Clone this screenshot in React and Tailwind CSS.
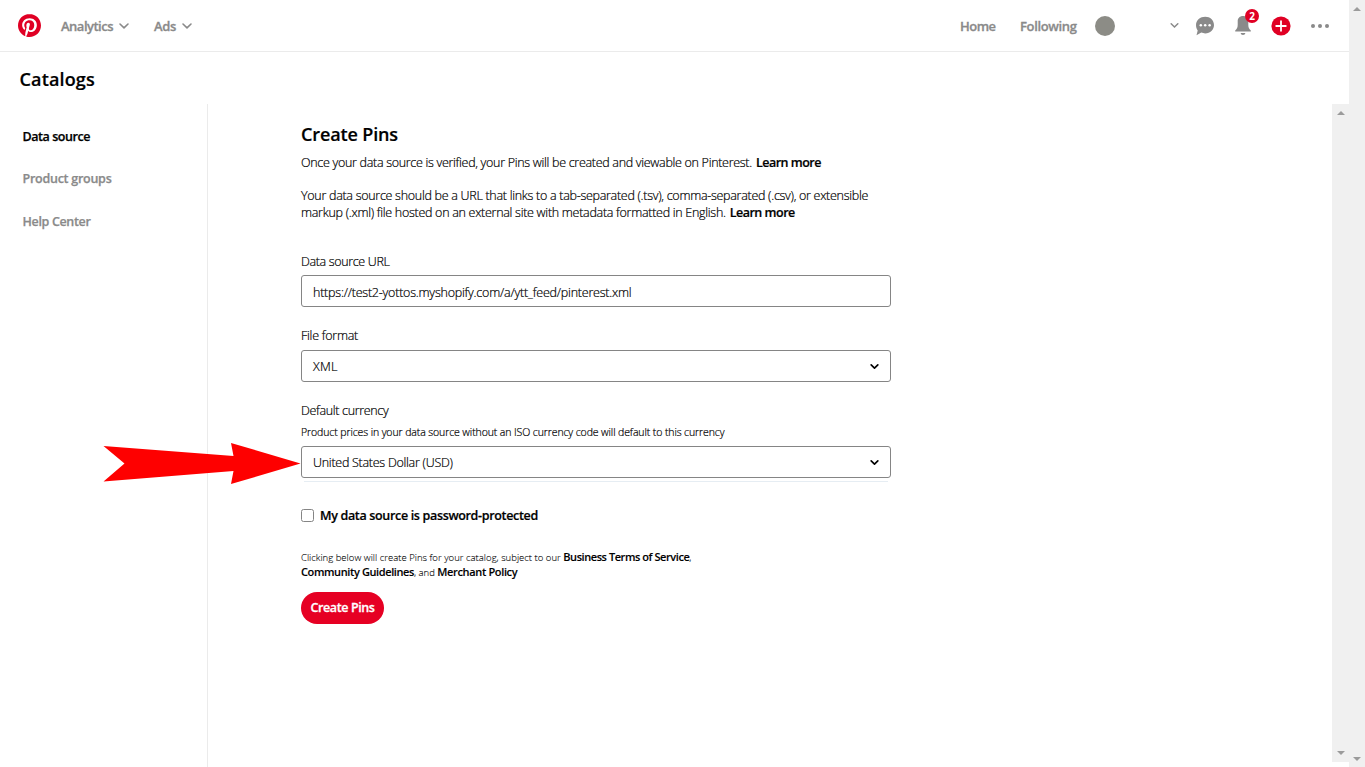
import React from "react";

function Chevron({ className }) {
  return (
    <svg viewBox="0 0 10 6" className={className} fill="none" stroke="currentColor" strokeLinecap="round" strokeLinejoin="round">
      <path d="M1 1l4 3.9L9 1" />
    </svg>
  );
}

function Logo() {
  return (
    <svg viewBox="0 0 24 24" className="h-[23px] w-[23px]">
      <circle cx="12" cy="12" r="11.5" fill="#fff" />
      <path
        fill="#e00024"
        d="M12 0C5.373 0 0 5.372 0 12c0 5.084 3.163 9.426 7.627 11.174-.105-.949-.2-2.405.042-3.441.218-.937 1.407-5.965 1.407-5.965s-.359-.719-.359-1.782c0-1.668.967-2.914 2.171-2.914 1.023 0 1.518.769 1.518 1.69 0 1.029-.655 2.568-.994 3.995-.283 1.194.599 2.169 1.777 2.169 2.133 0 3.772-2.249 3.772-5.495 0-2.873-2.064-4.882-5.012-4.882-3.414 0-5.418 2.561-5.418 5.207 0 1.031.397 2.138.893 2.738a.36.36 0 0 1 .083.345l-.333 1.36c-.053.22-.174.267-.402.161-1.499-.698-2.436-2.889-2.436-4.649 0-3.785 2.75-7.262 7.929-7.262 4.163 0 7.398 2.967 7.398 6.931 0 4.136-2.607 7.464-6.227 7.464-1.216 0-2.359-.631-2.75-1.378l-.748 2.853c-.271 1.043-1.002 2.35-1.492 3.146 1.124.347 2.317.535 3.554.535 6.627 0 12-5.373 12-12 0-6.628-5.373-12-12-12z"
      />
    </svg>
  );
}

function Header() {
  return (
    <header className="flex h-[52px] shrink-0 items-center border-b border-[#ebebeb] pl-[18px] text-[13px] font-semibold text-[#8a8a8a] [-webkit-text-stroke:0.3px]">
      <Logo />
      <span className="ml-5 mt-[3px] w-[52px] whitespace-nowrap tracking-[-0.5px]">Analytics</span>
      <Chevron className="ml-1.5 h-1.5 w-2.5 overflow-visible [stroke-width:1.6px]" />
      <span className="ml-[25px] mt-[3px] w-[22px] whitespace-nowrap tracking-[-0.35px]">Ads</span>
      <Chevron className="ml-1.5 h-1.5 w-2.5 overflow-visible [stroke-width:1.6px]" />
      <div className="flex-1" />
      <span className="mt-[3px] w-[60px] whitespace-nowrap tracking-[-0.53px]">Home</span>
      <span className="mt-[3px] w-[75px] whitespace-nowrap tracking-[-0.36px]">Following</span>
      <span className="h-5 w-5 rounded-full bg-[#8c8c86]" />
      <Chevron className="ml-[55px] h-[5px] w-[9px] overflow-visible [stroke-width:1.8px]" />
      <svg viewBox="0 0 20 20" className="ml-4 h-5 w-5">
        <path fill="#8a8a8a" d="M10.2.8C15.2.8 19 4.3 19 9s-3.8 8.4-8.8 8.4c-1.4 0-2.7-.3-3.9-.8L1.5 19.200l1.200-4.700C1.600 13 1 11.100 1 9 1 4.300 5.200.8 10.200.8z" />
        <g fill="#fff">
          <circle cx="5.8" cy="9.2" r="1.25" />
          <circle cx="10.2" cy="9.2" r="1.25" />
          <circle cx="14.6" cy="9.2" r="1.25" />
        </g>
      </svg>
      <div className="relative ml-5 h-5 w-4">
        <svg viewBox="0 0 16 20" className="h-5 w-4">
          <path fill="#8a8a8a" d="M8 0c3.2 0 5.3 2.2 5.3 5.2v3.600c0 2.400.7 4 2.500 5.800v.9H.2v-.9c1.800-1.800 2.500-3.400 2.500-5.800V5.200C2.700 2.200 4.800 0 8 0z" />
          <path fill="#8a8a8a" d="M5.7 17h4.600c0 1.200-1 2-2.300 2s-2.300-.8-2.300-2z" />
        </svg>
        <span className="absolute -top-[7px] left-[10px] flex h-[14px] w-[14px] items-center justify-center rounded-full bg-[#e00024] text-[10px] font-bold leading-none text-white [-webkit-text-stroke:0]">
          2
        </span>
      </div>
      <svg viewBox="0 0 20 20" className="ml-5 h-5 w-5">
        <circle cx="10" cy="10" r="9.6" fill="#e00024" />
        <path d="M10 5.2v9.6M5.2 10h9.6" stroke="#fff" strokeWidth="1.8" strokeLinecap="round" />
      </svg>
      <svg viewBox="0 0 18 4" className="ml-5 mr-5 h-1 w-[18px]" fill="#8a8a8a">
        <circle cx="2" cy="2" r="2" />
        <circle cx="9" cy="2" r="2" />
        <circle cx="16" cy="2" r="2" />
      </svg>
    </header>
  );
}

function ScrollArrow({ down }) {
  return (
    <svg viewBox="0 0 8 4" className="h-1 w-2" fill="#9b9b9b">
      <path d={down ? "M0 0h8L4 4z" : "M0 4h8L4 0z"} />
    </svg>
  );
}

function Sidebar() {
  return (
    <nav className="flex w-52 shrink-0 flex-col border-r border-[#ebebeb] pl-[22.5px] pt-[23px] text-[12.5px] font-semibold leading-5 text-[#8a8a8a] [-webkit-text-stroke:0.25px]">
      <span className="tracking-[-0.44px] text-black">Data source</span>
      <span className="mt-[22px] tracking-[-0.26px]">Product groups</span>
      <span className="mt-[23px] tracking-[-0.34px]">Help Center</span>
    </nav>
  );
}

function Field({ children, select }) {
  return (
    <div className="flex h-8 w-[590px] items-center justify-between rounded-[3px] border border-[#858585] pl-[11px] pr-[11px]">
      {children}
      {select && <Chevron className="mt-px h-[5px] w-[9px] overflow-visible text-black [stroke-width:2px]" />}
    </div>
  );
}

function Strong({ children }) {
  return <b className="ml-1 font-semibold tracking-[-0.49px]">{children}</b>;
}

function Content() {
  return (
    <main className="flex flex-1 flex-col items-start whitespace-nowrap pl-[93px] pt-[18px] text-[12.5px] font-light text-black [-webkit-text-stroke:0.2px]">
      <h1 className="h-6 text-lg font-semibold leading-6 tracking-[-0.13px]">Create Pins</h1>
      <p className="mt-2 leading-[17px]">
        <span className="tracking-[-0.3px]">
          Once your data source is verified, your Pins will be created and viewable on Pinterest.
        </span>
        <Strong>Learn more</Strong>
      </p>
      <p className="mt-4 leading-[17px] tracking-[-0.286px]">
        Your data source should be a URL that links to a tab-separated (.tsv), comma-separated (.csv), or extensible
        <br />
        markup (.xml) file hosted on an external site with metadata formatted in English.
        <Strong>Learn more</Strong>
      </p>
      <label className="mt-8 leading-[17px] tracking-[-0.35px]">Data source URL</label>
      <div className="mt-[5px]">
        <Field>
          <span className="mt-1 tracking-[-0.225px]">https://test2-yottos.myshopify.com/a/ytt_feed/pinterest.xml</span>
        </Field>
      </div>
      <label className="mt-5 leading-[17px] tracking-[-0.26px]">File format</label>
      <div className="mt-1.5">
        <Field select>
          <span className="mt-[3px] tracking-[0.19px]">XML</span>
        </Field>
      </div>
      <label className="mt-5 leading-[17px] tracking-[-0.33px]">Default currency</label>
      <p className="mt-[5px] text-[10.5px] leading-[17px] tracking-[-0.1px]">
        Product prices in your data source without an ISO currency code will default to this currency
      </p>
      <div className="mt-[5px]">
        <Field select>
          <span className="mt-[3px] tracking-[-0.27px]">United States Dollar (USD)</span>
        </Field>
      </div>
      <div className="ml-[3px] mt-[3px] h-px w-[584px] bg-[#e6edf3]" />
      <label className="mt-[25px] flex items-center font-semibold leading-[17px] tracking-[-0.33px]">
        <span className="-mt-px mr-1.5 h-[13px] w-[13px] rounded-[2.5px] border border-[#858585]" />
        My data source is password-protected
      </label>
      <p className="mt-[26px] h-[30px] text-[9.5px] leading-[15px] [-webkit-text-stroke:0.1px]">
        <span className="tracking-[0.025px]">Clicking below will create Pins for your catalog, subject to our </span>
        <b className="text-[11px] font-semibold leading-[11px] tracking-[-0.44px]">Business Terms of Service</b>,
        <br />
        <b className="text-[11px] font-semibold leading-[11px] tracking-[-0.393px]">Community Guidelines</b>, and{" "}
        <b className="text-[11px] font-semibold leading-[11px] tracking-[-0.348px]">Merchant Policy</b>
      </p>
      <button className="mt-3 h-8 w-[83px] rounded-full bg-[#e60023] pt-px font-semibold tracking-[-0.396px] text-white [-webkit-text-stroke:0.3px]">
        Create Pins
      </button>
    </main>
  );
}

function PointerArrow() {
  return (
    <svg viewBox="0 0 198 42" className="absolute left-[103px] top-[443px] h-[42px] w-[198px]" fill="#fe0000">
      <path d="M0.500 3 L130.500 13 L128 0 L197.500 20.500 L128 41 L130.500 28 L0.500 38.500 L21.500 20.500 Z" />
    </svg>
  );
}

export default function App() {
  return (
    <div className="relative flex h-[767px] w-[1365px] overflow-hidden bg-white font-['Open_Sans','Noto_Sans',sans-serif]">
      <div className="flex flex-1 flex-col">
        <Header />
        <div className="h-[52px] shrink-0 pl-[19.5px] pt-[15px] text-lg font-semibold leading-6 tracking-[0.15px] [-webkit-text-stroke:0.2px]">
          Catalogs
        </div>
        <div className="flex flex-1">
          <Sidebar />
          <Content />
          <div className="mb-[5px] flex w-[17px] flex-col items-center justify-between bg-[#f0f0f0] py-[7px]">
            <ScrollArrow />
            <ScrollArrow down />
          </div>
        </div>
      </div>
      <div className="flex w-4 flex-col items-center justify-between bg-[#f0f0f0] pb-1.5 pt-[7px]">
        <ScrollArrow />
        <ScrollArrow down />
      </div>
      <PointerArrow />
    </div>
  );
}
